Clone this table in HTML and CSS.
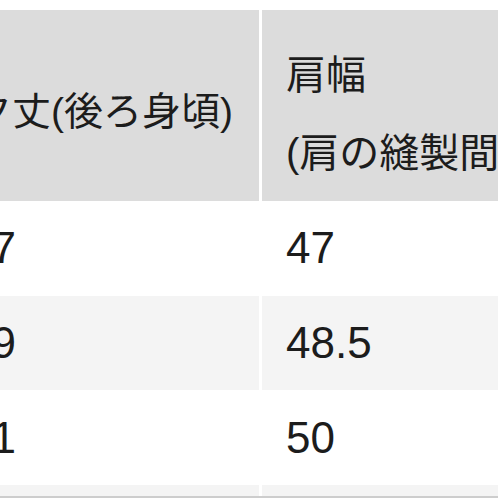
FILE: index.html
```html
<!DOCTYPE html>
<html lang="ja">
<head>
<meta charset="utf-8">
<link rel="stylesheet" href="styles.css">
</head>
<body>
<div class="scroller">
  <table class="size-table">
    <colgroup>
      <col class="c1">
      <col class="c2">
    </colgroup>
    <thead>
      <tr class="head">
        <th class="h-single">ク丈(後ろ身頃)</th>
        <th class="h-double">肩幅<br>(肩の縫製間)</th>
      </tr>
    </thead>
    <tbody>
      <tr class="row"><td>77</td><td class="second">47</td></tr>
      <tr class="row alt"><td>79</td><td class="second">48.5</td></tr>
      <tr class="row"><td>81</td><td class="second">50</td></tr>
      <tr class="row alt"><td>83</td><td class="second">51.5</td></tr>
    </tbody>
  </table>
</div>
</body>
</html>
```
FILE: styles.css
```css
html, body {
  margin: 0;
  padding: 0;
  background: #ffffff;
}

.scroller {
  height: 498px;
  box-sizing: border-box;
  overflow: hidden;
  padding-top: 10px;
  border-bottom: 2px solid #cdcdcd;
}

.size-table {
  margin-left: -57px;
  table-layout: fixed;
  border-collapse: separate;
  border-spacing: 0;
  width: 620px;
  font-family: "Liberation Sans", "Noto Sans CJK JP", sans-serif;
  font-size: 44px;
  color: #1c1c1c;
}

.c1 { width: 316px; }
.c2 { width: 304px; }

.size-table th,
.size-table td {
  text-align: left;
  font-weight: normal;
  padding: 0 24px;
  white-space: nowrap;
  overflow: hidden;
  box-sizing: border-box;
}

.head th {
  background: #dcdcdc;
  height: 191px;
  vertical-align: top;
  font-size: 40px;
}

.head .h-single {
  padding-left: 30px;
  padding-top: 77px;
  line-height: 50px;
  font-size: 39px;
}

.head .h-double {
  padding-top: 26px;
  line-height: 78px;
  border-left: 3px solid #ffffff;
}

.row td {
  height: 94.7px;
  vertical-align: middle;
  line-height: 50px;
  background: #ffffff;
}

.row.alt td {
  background: #f4f4f4;
}

.row td.second {
  border-left: 3px solid #ffffff;
}
```
